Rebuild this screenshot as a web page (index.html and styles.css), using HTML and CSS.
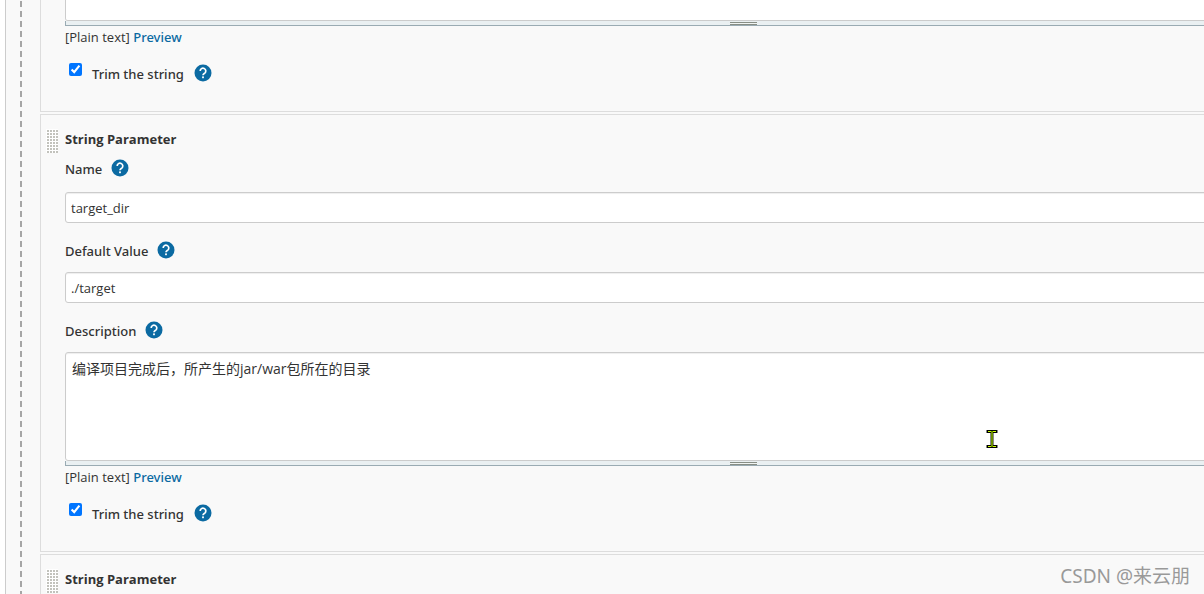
FILE: index.html
```html
<!DOCTYPE html>
<html lang="en">
<head>
<meta charset="utf-8">
<title>String Parameter</title>
<link rel="stylesheet" href="styles.css">
</head>
<body>
<svg class="sprite" aria-hidden="true">
  <symbol id="help" viewBox="0 0 18 18">
    <circle cx="9" cy="9" r="8.5" fill="#0b6aa2"/>
    <path d="M6.200 7a2.800 2.800 0 1 1 4.600 2.100C9.700 9.900 9 10.100 9 11.300" fill="none" stroke="#fff" stroke-width="1.700"/>
    <rect x="8.100" y="12.400" width="1.800" height="1.800" fill="#fff"/>
  </symbol>
</svg>
<main class="page">
  <form class="params">
    <section class="card card-tail">
      <div class="editor">
        <textarea class="box area area-tail" aria-label="Previous description"></textarea>
        <div class="grabber"></div>
      </div>
      <p class="preview">[Plain text] <a href="#preview">Preview</a></p>
      <div class="trim">
        <input type="checkbox" id="trim1" checked><label for="trim1">Trim the string</label>
        <button type="button" class="help" aria-label="Help for trim"><svg><use href="#help"/></svg></button>
      </div>
    </section>

    <section class="card">
      <div class="grip"></div>
      <h2 class="title">String Parameter</h2>
      <div class="field">
        <div class="label"><label for="name">Name</label>
          <button type="button" class="help" aria-label="Help for name"><svg><use href="#help"/></svg></button></div>
        <input class="box" id="name" type="text" value="target_dir">
      </div>
      <div class="field">
        <div class="label"><label for="value">Default Value</label>
          <button type="button" class="help" aria-label="Help for default value"><svg><use href="#help"/></svg></button></div>
        <input class="box" id="value" type="text" value="./target">
      </div>
      <div class="field">
        <div class="label"><label for="desc">Description</label>
          <button type="button" class="help" aria-label="Help for description"><svg><use href="#help"/></svg></button></div>
        <div class="editor">
          <textarea class="box area" id="desc">编译项目完成后，所产生的jar/war包所在的目录</textarea>
          <div class="grabber"></div>
        </div>
      </div>
      <p class="preview">[Plain text] <a href="#preview">Preview</a></p>
      <div class="trim">
        <input type="checkbox" id="trim2" checked><label for="trim2">Trim the string</label>
        <button type="button" class="help" aria-label="Help for trim"><svg><use href="#help"/></svg></button>
      </div>
    </section>

    <section class="card">
      <div class="grip"></div>
      <h2 class="title">String Parameter</h2>
    </section>
  </form>
  <svg class="cursor" viewBox="0 0 12 18" aria-hidden="true">
    <path d="M0 0h12v3H8v12h4v3H0v-3h4V3H0z" fill="#888"/>
    <path d="M1 0h10v3H1zM1 15h10v3H1z" fill="#000"/>
    <path d="M2 1h3v1H2zM7 1h3v1H7zM2 16h3v1H2zM7 16h3v1H7z" fill="#cf0"/>
    <path d="M5 1h2v16H5z" fill="#6b8e00"/>
  </svg>
  <div class="watermark">CSDN @来云朋</div>
</main>
</body>
</html>
```

FILE: styles.css
```css
* { box-sizing: border-box; }

body {
  margin: 0;
  background: #fff;
  color: #333;
  font: 14px/20px "Open Sans", "Noto Sans CJK SC", sans-serif;
}

.sprite { display: none; }

.page {
  position: relative;
  height: 100vh;
  margin-left: 5px;
  padding-left: 34px;
  overflow: hidden;
  border-left: 1px solid #ccc;
  background:
    repeating-linear-gradient(#f9f9f9 0 1px, #a6a6a6 1px 7px, #f9f9f9 7px 10px) 14px 0 / 2px 100% no-repeat,
    #f9f9f9;
}

/* The form is wider than the viewport and runs off its right edge. */
.params {
  width: calc(100% + 242px);
  display: flex;
  flex-direction: column;
  gap: 2px;
}

.card {
  position: relative;
  padding: 14px 24px 23px;
  border: 1px solid #ddd;
}

.card-tail {
  padding-top: 0;
  border-top: 0;
}

.grip {
  position: absolute;
  left: 5px;
  top: 14px;
  width: 12px;
  height: 24px;
  background:
    linear-gradient(90deg, #fff 1px, transparent 1px) 0 0 / 3px 3px,
    linear-gradient(#fff 1px, #c2c2bc 1px) 0 0 / 3px 3px;
}

.title {
  margin: 0;
  font-size: 13px;
  line-height: 20px;
  font-weight: 700;
}

.label {
  display: flex;
  align-items: center;
  gap: 9px;
  height: 43px;
  padding-bottom: 3px;
}

.field + .field .label {
  height: 49px;
  padding: 8px 0 2px;
}

.label label, .trim label {
  font: 500 13px/20px "Noto Sans", sans-serif;
}

.help {
  width: 18px;
  height: 18px;
  margin-bottom: 2px;
  padding: 0;
  border: 0;
  background: none;
}

.help svg {
  display: block;
  width: 18px;
  height: 18px;
}

.box {
  display: block;
  width: 100%;
  height: 31px;
  margin: 0;
  padding: 4px 5px;
  border: 1px solid #ccc;
  border-radius: 3px;
  background: #fff;
  box-shadow: inset 0 1px 1px #eee;
  color: #333;
  font-family: inherit;
  font-size: 13px;
  line-height: 20px;
}

.area {
  height: 109px;
  padding: 6px;
  resize: none;
  font-size: 14px;
}

.area-tail {
  height: 21px;
  border-top: 0;
  border-radius: 0 0 3px 3px;
  box-shadow: none;
}

.grabber {
  height: 5px;
  border: 1px solid #9aabb3;
  border-top: 0;
  background: linear-gradient(#888e85 0 1px, #f0f4f2 1px 2px, #888e85 2px 3px) 50% 1px / 27px 3px no-repeat, #eaf0f2;
}

.preview {
  margin: 1px 0 0;
  font-size: 13px;
  line-height: 20px;
}

.preview a {
  color: #0b6aa2;
  font-family: "Noto Sans", sans-serif;
  font-weight: 500;
  text-decoration: none;
}

.trim {
  display: flex;
  align-items: center;
  gap: 10px;
  height: 37px;
  margin-top: 4px;
  padding: 9px 0 0 4px;
}

.trim input {
  width: 13px;
  height: 13px;
  margin: 0 0 10px;
}

.cursor {
  position: absolute;
  right: 206px;
  top: 430px;
  width: 12px;
  height: 18px;
}

.watermark {
  position: absolute;
  right: 14px;
  bottom: 4px;
  color: #999;
  font: 19px/28px "Noto Sans", "Noto Sans CJK SC", sans-serif;
}
```
